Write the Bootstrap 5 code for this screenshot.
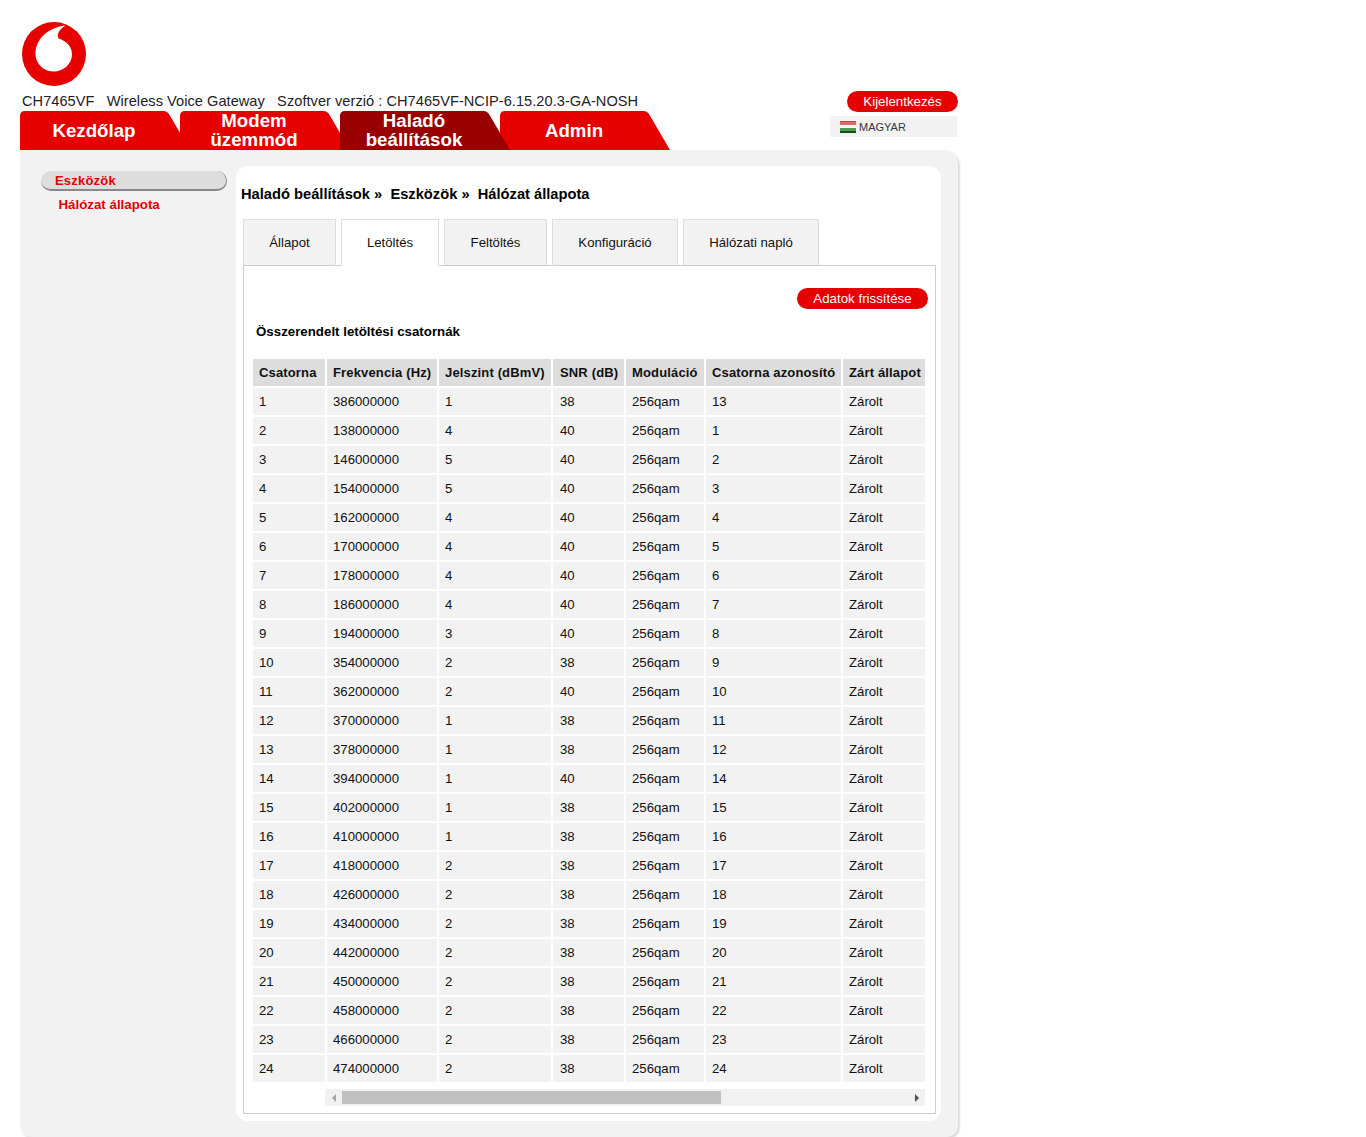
<!DOCTYPE html>
<html lang="hu">
<head>
<meta charset="utf-8">
<title>Hálózat állapota</title>
<link href="https://cdn.jsdelivr.net/npm/bootstrap@5.3.0/dist/css/bootstrap.min.css" rel="stylesheet">
<style>
html,body{height:1137px;overflow:hidden}
body{font-family:"Liberation Sans",Arial,sans-serif;color:#000;background:#fff;font-size:13px}
.shell{width:938px;margin-left:20px}
.headwrap{height:150px}
.brand{display:block;margin-left:2px;padding-top:22px;height:93px}
.infoline{font-size:14.6px;line-height:17px;height:18px;margin:0 0 0 2px;white-space:pre;color:#222;letter-spacing:.035px}
.headright{width:128px;padding-top:91px}
.logout{display:block;margin-left:17px;width:111px;height:21px;background:#e60000;color:#fff;font-size:13.3px;line-height:21px;padding:0;border:0;border-radius:11px}
.logout:hover,.refresh:hover{background:#e60000;color:#fff}
.langbox{width:127px;height:21px;margin-top:4px;background:#f2f2f2;font-size:11px;color:#334;padding-left:10px;gap:3px;line-height:21px}
.langbox span{padding-top:2px}
.mainnav{height:39px;position:relative;flex-wrap:nowrap}
.tabcell{width:160px;height:39px;position:relative;z-index:1}
.tabcell.now{z-index:3}
.tabcell::before{content:"";position:absolute;left:0;top:0;width:170px;height:39px;background:#e60000;clip-path:path("M0 39V5Q0 0 5 0H144Q147 0 149 3L170 39Z")}
.tabcell.now::before{background:#990000}
.tablabel{position:relative;display:flex;width:148px;height:38px;align-items:center;justify-content:center;text-align:center;color:#fff;font-weight:700;font-size:18.7px;line-height:19px;text-decoration:none}
.stage{width:938px;height:987px;background:#f2f2f2;border-radius:0 14px 12px 12px;box-shadow:2px 2px 2px #ddd;padding:16px 17px 16px 21px}
.sidebar{width:186px;margin-right:9px;padding-top:5px}
.sidehead{height:20px;line-height:20px;background:#ddd;border-radius:10px;border-bottom:2px solid #888;border-right:1px solid #888;color:#e60000;font-weight:700;font-size:13px;padding-left:14px;letter-spacing:.2px}
.sideitem{display:block;color:#e60000;font-weight:700;font-size:13.3px;line-height:16px;margin:6px 0 0 17.5px;text-decoration:none}
.sheet{width:705px;height:955px;background:#fff;border-radius:12px;padding:0 5px 0 7px}
.crumbs{font-weight:700;font-size:14.7px;line-height:18px;padding-top:19px;height:53px;margin-left:-2px;white-space:pre}
.tabrow{border:0;gap:5px;height:47px;flex-wrap:nowrap}
.tabrow .nav-link{height:47px;padding:14px 0 0;text-align:center;border:1px solid #ddd;border-bottom:1px solid #ccc;background:#f2f2f2;color:#111;font-size:13.2px;line-height:17px;border-radius:0;margin:0}
.tabrow .nav-link.active{background:#fff;color:#111;border-color:#ddd #ddd #fff}
.tabw1{width:93px}.tabw2{width:98px}.tabw3{width:103px}.tabw4{width:126px}.tabw5{width:136px}
.tabbody{height:849px;margin-top:-1px;border:1px solid #ccc;background:#fff;padding:22px 8px 0 9px;width:693px}
.refresh{display:block;width:131px;height:21px;margin-left:544px;background:#e60000;color:#fff;font-size:13.3px;line-height:21px;padding:0;border:0;border-radius:11px}
.caption{font-weight:700;font-size:13.3px;line-height:16px;margin:15px 0 0 3px}
.gridwrap{margin:17px 0 0 -2px;width:676px}
.datagrid{border-collapse:separate;border-spacing:2px;table-layout:fixed;width:676px;margin:0;font-size:13.2px;color:#111}
.datagrid th,.datagrid td{height:27px;padding:0 0 0 6px;background:#f2f2f2;border:0;vertical-align:middle;line-height:16px;white-space:nowrap;box-shadow:none;color:#111}
.datagrid th{background:#ddd;font-weight:700;letter-spacing:.15px;font-size:13px}
.datagrid th:nth-child(4),.datagrid td:nth-child(4){padding-left:7px}
.fakebar{margin:5px 0 0 74px;width:600px;height:17px;background:#f1f1f1;align-items:center}
.fakearrow{width:17px;height:17px;flex:none;display:flex;align-items:center;justify-content:center}
.fakethumb{width:379px;height:13px;background:#c0c0c0}
</style>
</head>
<body>
<div class="shell">
  <header class="headwrap d-flex justify-content-between">
    <div class="headleft">
      <div class="brand">
        <svg width="64" height="64" viewBox="0 0 64 64" class="d-block" role="img" aria-label="Vodafone">
          <circle cx="32" cy="32" r="32" fill="#e60000"/>
          <path d="M43.500 3.500C34 4.500 19 10 14.500 24.500 10.500 37 18.500 49.500 31.500 49.500 42 49.500 50 41.500 50 32.500 50 24.500 44.500 19 36.500 16.500 34 11 39 6.500 43.500 3.500Z" fill="#fff"/>
        </svg>
      </div>
      <p class="infoline">CH7465VF   Wireless Voice Gateway   Szoftver verzió : CH7465VF-NCIP-6.15.20.3-GA-NOSH</p>
      <nav class="mainnav d-flex">
        <div class="tabcell"><a href="#" class="tablabel">Kezdőlap</a></div>
        <div class="tabcell"><a href="#" class="tablabel">Modem<br>üzemmód</a></div>
        <div class="tabcell now"><a href="#" class="tablabel">Haladó<br>beállítások</a></div>
        <div class="tabcell"><a href="#" class="tablabel">Admin</a></div>
      </nav>
    </div>
    <div class="headright">
      <button type="button" class="btn logout">Kijelentkezés</button>
      <div class="langbox d-flex align-items-center">
        <svg width="16" height="12" viewBox="0 0 16 12" aria-hidden="true">
          <rect width="16" height="1" fill="#b05050"/><rect y="1" width="16" height="3" fill="#e26a6a"/>
          <rect y="4" width="16" height="3" fill="#f6f6f6"/>
          <rect y="7" width="16" height="3" fill="#4f9a4f"/><rect y="10" width="16" height="2" fill="#14491a"/>
        </svg>
        <span>MAGYAR</span>
      </div>
    </div>
  </header>
  <main class="stage d-flex">
    <aside class="sidebar">
      <div class="sidehead">Eszközök</div>
      <a href="#" class="sideitem">Hálózat állapota</a>
    </aside>
    <section class="sheet">
      <div class="crumbs">Haladó beállítások »  Eszközök »  Hálózat állapota</div>
      <ul class="nav nav-tabs tabrow">
        <li class="nav-item tabw1"><a class="nav-link" href="#">Állapot</a></li>
        <li class="nav-item tabw2"><a class="nav-link active" href="#">Letöltés</a></li>
        <li class="nav-item tabw3"><a class="nav-link" href="#">Feltöltés</a></li>
        <li class="nav-item tabw4"><a class="nav-link" href="#">Konfiguráció</a></li>
        <li class="nav-item tabw5"><a class="nav-link" href="#">Hálózati napló</a></li>
      </ul>
      <div class="tabbody">
        <button type="button" class="btn refresh">Adatok frissítése</button>
        <div class="caption">Összerendelt letöltési csatornák</div>
        <div class="gridwrap">
          <table class="table datagrid">
            <colgroup><col style="width:72px"><col style="width:110px"><col style="width:112px"><col style="width:71px"><col style="width:78px"><col style="width:135px"><col></colgroup>
            <thead><tr><th>Csatorna</th><th>Frekvencia (Hz)</th><th>Jelszint (dBmV)</th><th>SNR (dB)</th><th>Moduláció</th><th>Csatorna azonosító</th><th>Zárt állapot</th></tr></thead>
            <tbody>
<tr><td>1</td><td>386000000</td><td>1</td><td>38</td><td>256qam</td><td>13</td><td>Zárolt</td></tr>
<tr><td>2</td><td>138000000</td><td>4</td><td>40</td><td>256qam</td><td>1</td><td>Zárolt</td></tr>
<tr><td>3</td><td>146000000</td><td>5</td><td>40</td><td>256qam</td><td>2</td><td>Zárolt</td></tr>
<tr><td>4</td><td>154000000</td><td>5</td><td>40</td><td>256qam</td><td>3</td><td>Zárolt</td></tr>
<tr><td>5</td><td>162000000</td><td>4</td><td>40</td><td>256qam</td><td>4</td><td>Zárolt</td></tr>
<tr><td>6</td><td>170000000</td><td>4</td><td>40</td><td>256qam</td><td>5</td><td>Zárolt</td></tr>
<tr><td>7</td><td>178000000</td><td>4</td><td>40</td><td>256qam</td><td>6</td><td>Zárolt</td></tr>
<tr><td>8</td><td>186000000</td><td>4</td><td>40</td><td>256qam</td><td>7</td><td>Zárolt</td></tr>
<tr><td>9</td><td>194000000</td><td>3</td><td>40</td><td>256qam</td><td>8</td><td>Zárolt</td></tr>
<tr><td>10</td><td>354000000</td><td>2</td><td>38</td><td>256qam</td><td>9</td><td>Zárolt</td></tr>
<tr><td>11</td><td>362000000</td><td>2</td><td>40</td><td>256qam</td><td>10</td><td>Zárolt</td></tr>
<tr><td>12</td><td>370000000</td><td>1</td><td>38</td><td>256qam</td><td>11</td><td>Zárolt</td></tr>
<tr><td>13</td><td>378000000</td><td>1</td><td>38</td><td>256qam</td><td>12</td><td>Zárolt</td></tr>
<tr><td>14</td><td>394000000</td><td>1</td><td>40</td><td>256qam</td><td>14</td><td>Zárolt</td></tr>
<tr><td>15</td><td>402000000</td><td>1</td><td>38</td><td>256qam</td><td>15</td><td>Zárolt</td></tr>
<tr><td>16</td><td>410000000</td><td>1</td><td>38</td><td>256qam</td><td>16</td><td>Zárolt</td></tr>
<tr><td>17</td><td>418000000</td><td>2</td><td>38</td><td>256qam</td><td>17</td><td>Zárolt</td></tr>
<tr><td>18</td><td>426000000</td><td>2</td><td>38</td><td>256qam</td><td>18</td><td>Zárolt</td></tr>
<tr><td>19</td><td>434000000</td><td>2</td><td>38</td><td>256qam</td><td>19</td><td>Zárolt</td></tr>
<tr><td>20</td><td>442000000</td><td>2</td><td>38</td><td>256qam</td><td>20</td><td>Zárolt</td></tr>
<tr><td>21</td><td>450000000</td><td>2</td><td>38</td><td>256qam</td><td>21</td><td>Zárolt</td></tr>
<tr><td>22</td><td>458000000</td><td>2</td><td>38</td><td>256qam</td><td>22</td><td>Zárolt</td></tr>
<tr><td>23</td><td>466000000</td><td>2</td><td>38</td><td>256qam</td><td>23</td><td>Zárolt</td></tr>
<tr><td>24</td><td>474000000</td><td>2</td><td>38</td><td>256qam</td><td>24</td><td>Zárolt</td></tr>
            </tbody>
          </table>
          <div class="fakebar d-flex">
            <span class="fakearrow"><svg width="6" height="8" viewBox="0 0 6 8"><path d="M5 0V8L1 4Z" fill="#a3a3a3"/></svg></span>
            <span class="fakethumb"></span>
            <span class="ms-auto fakearrow"><svg width="6" height="8" viewBox="0 0 6 8"><path d="M1 0V8L5 4Z" fill="#505050"/></svg></span>
          </div>
        </div>
      </div>
    </section>
  </main>
</div>
<script src="https://cdn.jsdelivr.net/npm/bootstrap@5.3.0/dist/js/bootstrap.bundle.min.js"></script>
</body>
</html>
